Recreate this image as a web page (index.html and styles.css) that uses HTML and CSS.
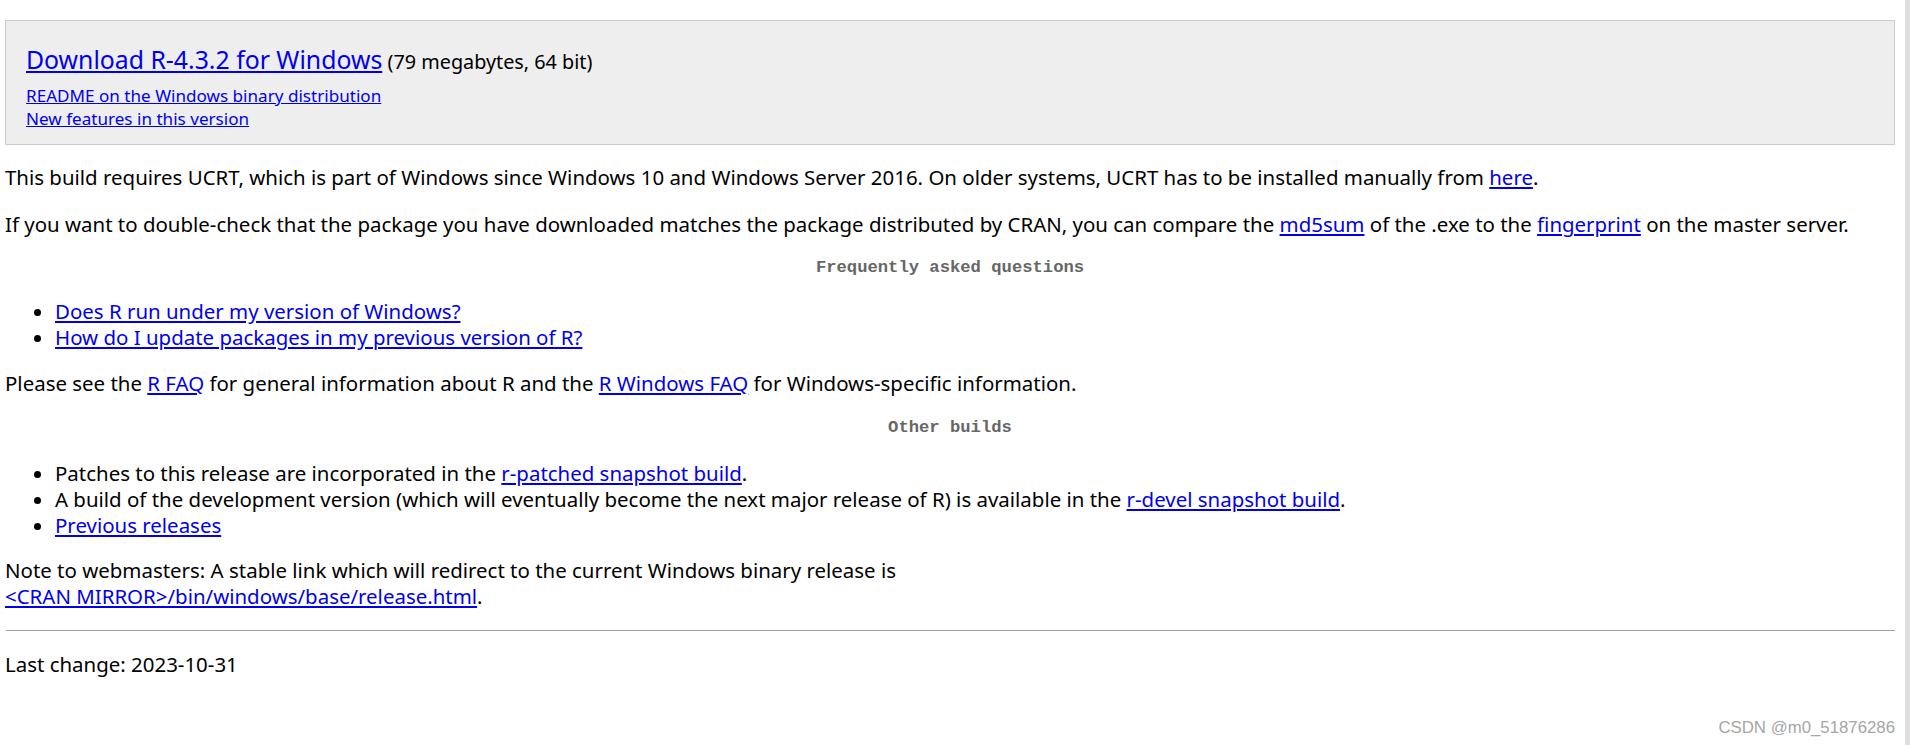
FILE: index.html
```html
<!DOCTYPE html>
<html lang="en">
<head>
<meta charset="utf-8">
<title>R-4.3.2 for Windows</title>
<link rel="stylesheet" href="styles.css">
</head>
<body>
<div class="page">
  <main class="main">
    <div class="download-box">
      <div class="title-line"><a class="title-link" href="#">Download R-4.3.2 for Windows</a> <span class="size">(79 megabytes, 64 bit)</span></div>
      <div class="sublinks">
        <a href="#">README on the Windows binary distribution</a><br>
        <a href="#">New features in this version</a>
      </div>
    </div>

    <p class="para p-first">This build requires UCRT, which is part of Windows since Windows 10 and Windows Server 2016. On older systems, UCRT has to be installed manually from <a href="#">here</a>.</p>
    <p class="para p-second">If you want to double-check that the package you have downloaded matches the package distributed by CRAN, you can compare the <a href="#">md5sum</a> of the .exe to the <a href="#">fingerprint</a> on the master server.</p>

    <h2 class="section-title st-faq">Frequently asked questions</h2>
    <ul class="list list-faq">
      <li><a href="#">Does R run under my version of Windows?</a></li>
      <li><a href="#">How do I update packages in my previous version of R?</a></li>
    </ul>

    <p class="para p-faq">Please see the <a href="#">R FAQ</a> for general information about R and the <a href="#">R Windows FAQ</a> for Windows-specific information.</p>

    <h2 class="section-title st-other">Other builds</h2>
    <ul class="list list-other">
      <li>Patches to this release are incorporated in the <a href="#">r-patched snapshot build</a>.</li>
      <li>A build of the development version (which will eventually become the next major release of R) is available in the <a href="#">r-devel snapshot build</a>.</li>
      <li><a href="#">Previous releases</a></li>
    </ul>

    <p class="para p-note">Note to webmasters: A stable link which will redirect to the current Windows binary release is<br><a href="#">&lt;CRAN MIRROR&gt;/bin/windows/base/release.html</a>.</p>

    <hr class="rule">

    <p class="para p-last">Last change: 2023-10-31</p>

    <div class="watermark">CSDN @m0_51876286</div>
  </main>
  <div class="scrollbar"></div>
</div>
</body>
</html>
```
FILE: styles.css
```css
html, body {
  margin: 0;
  padding: 0;
  background: #ffffff;
}

body {
  font-family: "Noto Sans", "Open Sans", sans-serif;
  font-size: 20.45px;
  line-height: 26px;
  color: #000000;
}

a {
  color: #0000ee;
}

.page {
  display: flex;
  height: 745px;
  overflow: hidden;
}

.main {
  position: relative;
  flex: 1;
  padding: 20px 10px 0 5px;
}

.scrollbar {
  width: 5px;
  background: #dedee2;
}

.download-box {
  background: #eeeeee;
  border: 1px solid #cccccc;
  padding: 21px 20px 14px 20px;
}

.title-line {
  line-height: 34px;
}

.title-link {
  font-size: 24.8px;
}

.size {
  font-size: 19.8px;
}

.sublinks {
  margin-top: 5px;
  font-size: 17.1px;
  line-height: 23px;
}

.para {
  margin: 0;
}

.p-first { margin-top: 19px; }
.p-second { margin-top: 21px; }
.p-faq { margin-top: 20px; }
.p-note { margin-top: 19px; }
.p-last { margin-top: 20px; }

.section-title {
  margin: 0;
  font-family: "Liberation Mono", monospace;
  font-size: 17.2px;
  line-height: 20px;
  font-weight: bold;
  color: #666666;
  text-align: center;
}

.st-faq { margin-top: 21px; }
.st-other { margin-top: 22px; }

.list {
  margin: 0;
  padding-left: 50px;
}

.list-faq { margin-top: 20px; }
.list-other { margin-top: 22px; }

.rule {
  margin: 21px 0 0 1px;
  border: 0;
  height: 1px;
  background: #a0a0a0;
}

.watermark {
  position: absolute;
  right: 10px;
  bottom: 7px;
  font-family: "Liberation Sans", Arial, sans-serif;
  font-size: 16.8px;
  line-height: 20px;
  color: #a6a6a6;
}
```
